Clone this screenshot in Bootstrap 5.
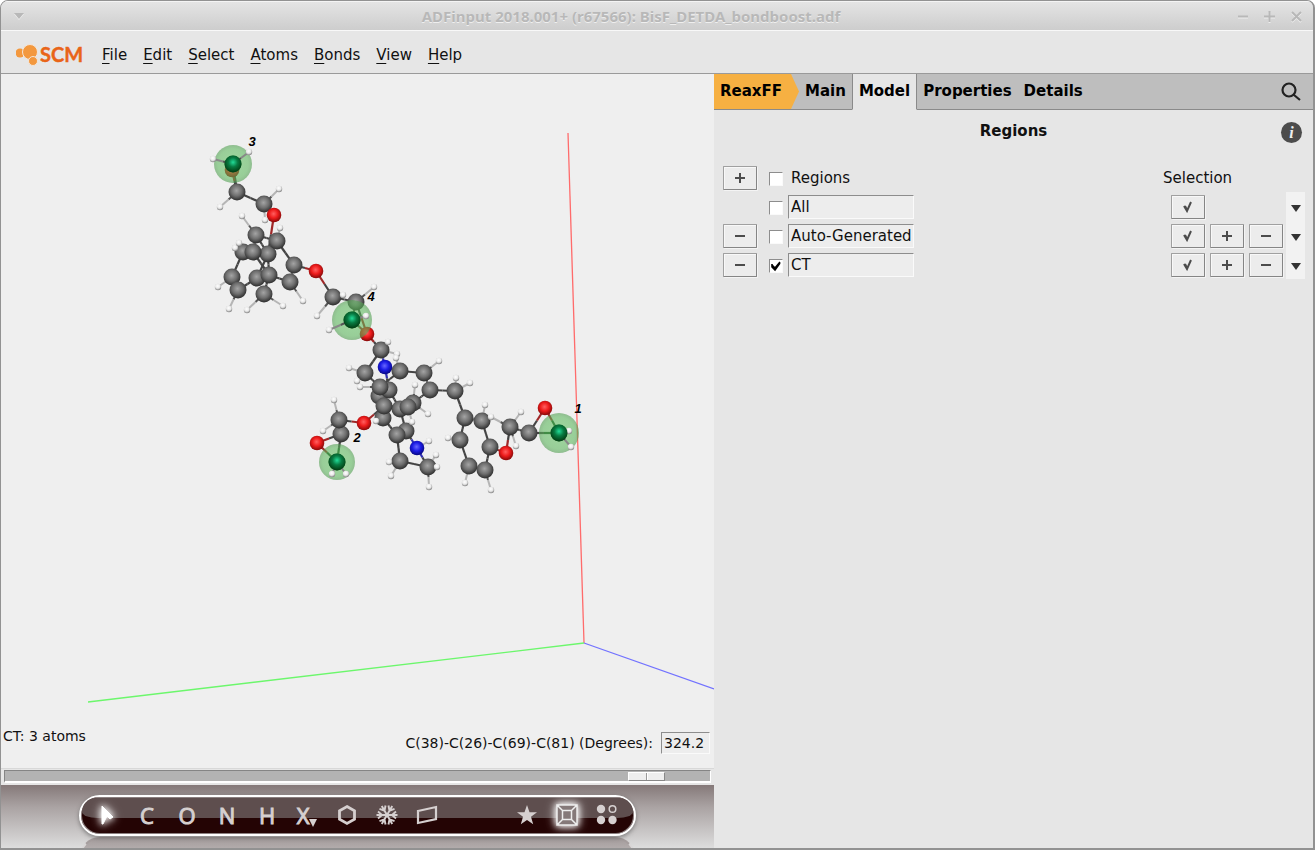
<!DOCTYPE html>
<html lang="en">
<head>
<meta charset="utf-8">
<meta name="viewport" content="width=device-width, initial-scale=1">
<title>ADFinput</title>
<link href="https://cdn.jsdelivr.net/npm/bootstrap@5.3.0/dist/css/bootstrap.min.css" rel="stylesheet">
<style>
body{font-family:"DejaVu Sans",sans-serif;font-size:15px;line-height:20px;color:#111;background:#fff}
.app-window{min-height:100vh;background:#e6e6e6;border:1px solid #929292;border-right-width:2px;border-bottom-width:2px;border-radius:8px 8px 0 0;overflow:hidden}
.title-bar{height:30px;padding:0 11px 0 12px;background:linear-gradient(#e4e4e4,#cdcdcd);border-top:1px solid #f4f4f4;border-bottom:1px solid #f8f8f8;font:bold 15px/28px "Noto Sans",sans-serif;color:#b8b8b8;text-shadow:0 1px 0 #efefef}
.title-bar svg{stroke:#b8b8b8;stroke-width:2;fill:none;filter:drop-shadow(0 1px 0 #eee)}
.title-bar .drop{fill:#b8b8b8;stroke:none}
.title-bar button,.tool,.plain{border:0;background:none;padding:0;line-height:1}
.menu-bar{height:43px;padding:6px 0 0 15px;border-bottom:1px solid #9a9a9a}
.menu-bar a{color:#111;text-decoration:none}
.menu-bar u{text-underline-offset:3px}
.brand{margin-right:2px}
.view-pane{flex:713 1 0;min-width:0;background:#efefef}
.side-pane{flex:599 1 0;min-width:0}
.scene{flex:1 1 0;min-height:0;width:100%;display:block}
.status{height:42px;font-size:14px;line-height:20px;padding-left:2px}
.sunken{border:1px solid;border-color:#8d8d8d #fafafa #fafafa #8d8d8d;background:#ededed;color:#111;border-radius:0;padding:0 2px;font:inherit;outline:0}
.angle{width:49px;height:22px}
.slide-row{height:17px;border-top:1px solid #d8d8d8;background:#e6e6e6;padding:1px 3px 0}
.slide-row input{appearance:none;-webkit-appearance:none;display:block;width:100%;height:13px;margin:0;background:#b3b3b3;border:1px solid;border-color:#858585 #fff #fff #858585;border-bottom-width:2px}
.slide-row input::-webkit-slider-thumb{-webkit-appearance:none;width:37px;height:9px;background:linear-gradient(90deg,transparent 17px,#999 17px,#999 18px,#fff 18px,#fff 19px,transparent 19px),#eee;border:1px solid;border-color:#fff #888 #888 #fff;border-radius:0}
.tool-area{height:63px;padding:10px 78px 0;background:linear-gradient(#857979,#aaa3a3 35%,#ddd);overflow:hidden}
.pill{height:41px;border:2px solid #fff;border-radius:21px;padding:0 7px 0 6px;background:#240404;position:relative;box-shadow:0 2px 4px #4448,inset 0 0 0 1px #8b8080;flex:none}
.pill::before{content:"";position:absolute;inset:1px 1px 16px 1px;background:#5e4e4e;border-radius:18px 18px 20px 20px/18px 18px 8px 8px}
.tool{position:relative;width:40px;height:36px;color:#d6d0d0;font:22px/36px "Open Sans",sans-serif;-webkit-text-stroke:1px #d6d0d0;display:flex;align-items:center;justify-content:center}
.tool svg{overflow:visible}
.glow{filter:drop-shadow(0 0 3px #fff) drop-shadow(0 0 5px #fffc)}
.echo{height:30px;margin-top:1px;border:2px solid #d9d6d6;border-top-color:#a59d9d;border-radius:21px 21px 0 0;background:linear-gradient(#a59d9d,#b6b0b0 12px)}
.tab-row{height:36px;background:linear-gradient(#8a8a8a,#8a8a8a) bottom/100% 1px no-repeat #bebebe;font-weight:bold}
.tab-row a{color:#000;text-decoration:none;height:36px;line-height:34px;padding:0 6px;border-bottom:1px solid #8a8a8a}
.tab-row .method{background:#f6b042;padding-right:9px;position:relative;margin-right:8px}
.tab-row .method::after{content:"";position:absolute;left:100%;top:0;width:8px;height:35px;background:#f6b042;clip-path:polygon(0 0,100% 50%,0 100%)}
.tab-row .current{background:#e6e6e6;border-left:1px solid #8a8a8a;border-right:1px solid #8a8a8a;border-bottom-color:#e6e6e6}
.heading{grid-template-columns:1fr auto 1fr;padding:0 11px}
.info{background:#4c4c4c;color:#eee;border-radius:50%;width:21px;height:21px;font:italic bold 16px/20px "Liberation Serif",serif;padding:0}
.regions{padding:0 8px 0 9px}
.region-row{height:29px}
.key,.no-key{width:34px;height:24px;flex:none}
.key{border:1px solid #a0a0a0;border-right-color:#858585;border-bottom-color:#858585;background:#ececec;box-shadow:inset 1px 1px 0 #f8f8f8,1px 1px 0 #f4f4f4;padding:0;display:flex;align-items:center;justify-content:center;border-radius:1px}
.key svg{fill:none;stroke:#4c4c4c;stroke-width:2}
.tick{appearance:none;-webkit-appearance:none;width:14px;height:14px;margin:2px 5px 0 12px;background:#fff;border:1px solid;border-color:#8d8d8d #fafafa #fafafa #8d8d8d;flex:none}
.tick:checked{background:#fff url("data:image/svg+xml,%3Csvg xmlns='http://www.w3.org/2000/svg' viewBox='0 0 12 12'%3E%3Cpath d='M2 4v3l3 3 5-7M2 5l3 3 5-6' fill='none' stroke='%23000' stroke-width='1.6'/%3E%3C/svg%3E") center/12px no-repeat}
.region-label{padding-left:3px}
.region-name{width:126px;height:24px}
.selection{width:142px}
.key-set{gap:5px}
.more{width:19px;height:29px;background:#f2f2f2}
</style>
</head>
<body>
<div class="app-window d-flex flex-column">
  <header class="title-bar d-flex align-items-center">
    <button aria-label="Window menu"><svg width="12" height="8" class="d-block" viewBox="0 0 12 8"><path class="drop" d="M1 1h10l-5 6z"/></svg></button>
    <div class="flex-fill text-center">ADFinput 2018.001+ (r67566): BisF_DETDA_bondboost.adf</div>
    <button aria-label="Minimize" class="me-3"><svg width="11" height="11" class="d-block"><path d="M1 5.500h10"/></svg></button>
    <button aria-label="Maximize" class="me-3"><svg width="11" height="11" class="d-block"><path d="M0 5.500h11M5.500 0v11"/></svg></button>
    <button aria-label="Close"><svg width="11" height="11" class="d-block"><path d="M1 1l9 9M10 1l-9 9"/></svg></button>
  </header>
  <nav class="menu-bar d-flex align-items-center gap-3">
    <a href="#" class="brand" aria-label="SCM"><svg class="d-block" width="68" height="24" viewBox="15 43 68 24"><g fill="#f3983e"><circle cx="19" cy="53" r="4.500"/><circle cx="29" cy="52" r="7.500" stroke="#f3e6da"/><circle cx="32" cy="61" r="4.500" stroke="#f3e6da"/></g><text x="39" y="62" font-family="Lato,sans-serif" font-weight="bold" font-size="20" fill="#e96418" stroke="#e96418" stroke-width=".4">SCM</text></svg></a>
    <a href="#"><u>F</u>ile</a><a href="#"><u>E</u>dit</a><a href="#"><u>S</u>elect</a><a href="#"><u>A</u>toms</a><a href="#"><u>B</u>onds</a><a href="#"><u>V</u>iew</a><a href="#"><u>H</u>elp</a>
  </nav>
  <main class="d-flex flex-fill">
    <section class="view-pane d-flex flex-column">
      <svg class="scene" viewBox="1 74 713 652" role="img" aria-label="Molecule">
        <defs>
          <radialGradient id="gC" cx=".47" cy=".42" r=".58"><stop offset="0" stop-color="#a4a4a4"/><stop offset=".55" stop-color="#6e6e6e"/><stop offset="1" stop-color="#2c2c2c"/></radialGradient>
          <radialGradient id="gH" cx=".45" cy=".35" r=".65"><stop offset="0" stop-color="#fff"/><stop offset=".55" stop-color="#e8e8e8"/><stop offset="1" stop-color="#808080"/></radialGradient>
          <radialGradient id="gO" cx=".47" cy=".42" r=".58"><stop offset="0" stop-color="#ff6060"/><stop offset=".5" stop-color="#ee1c1c"/><stop offset="1" stop-color="#850808"/></radialGradient>
          <radialGradient id="gN" cx=".47" cy=".42" r=".58"><stop offset="0" stop-color="#6868ff"/><stop offset=".5" stop-color="#1c1ce6"/><stop offset="1" stop-color="#080880"/></radialGradient>
          <radialGradient id="gG" cx=".5" cy=".4" r=".6"><stop offset="0" stop-color="#22dc98"/><stop offset=".45" stop-color="#087b42"/><stop offset="1" stop-color="#023a10"/></radialGradient>
          <radialGradient id="gS"><stop offset="0" stop-color="#5fc45f" stop-opacity=".55"/><stop offset=".8" stop-color="#59b659" stop-opacity=".58"/><stop offset="1" stop-color="#559e55" stop-opacity=".62"/></radialGradient>
        </defs>
        <g fill="none"><path d="M568 133L584 643" stroke="#ff6b6b" stroke-width="1.300"/><path d="M88 702L584 643" stroke="#6cf76c" stroke-width="1.300"/><path d="M584 643L714 689" stroke="#7272ff" stroke-width="1.300"/></g>
        <g id="molecule"></g>
        <g font-family="Liberation Sans,sans-serif" font-size="13" font-weight="bold" font-style="italic" text-anchor="middle"><text x="252" y="146">3</text><text x="371" y="301">4</text><text x="357" y="442">2</text><text x="578" y="413">1</text></g>
      </svg>
      <div class="status d-flex justify-content-between">
        <div>CT: 3 atoms</div>
        <div class="d-flex align-items-center pt-2 pe-1 mb-3"><label for="angle" class="me-2">C(38)-C(26)-C(69)-C(81) (Degrees):</label><input id="angle" class="sunken angle" value="324.2"></div>
      </div>
      <div class="slide-row"><input type="range" min="0" max="1000" value="933" aria-label="Torsion angle"></div>
      <div class="tool-area">
        <div class="pill d-flex">
          <button class="tool" aria-label="Select"><svg class="glow" width="14" height="20" viewBox="0 0 14 20"><path d="M2 1L13 12l-3 2-3-3-4 8H2z" fill="#fff" stroke="#fff"/></svg></button>
          <button class="tool">C</button><button class="tool">O</button><button class="tool">N</button><button class="tool">H</button>
          <button class="tool">X<svg width="8" height="8" class="mt-3" viewBox="0 0 8 8"><path d="M0 0h8l-4 8z" fill="currentColor"/></svg></button>
          <button class="tool" aria-label="Ring"><svg width="20" height="20" viewBox="0 0 20 20"><path d="M10 1.500l7.500 4.300v8.400L10 18.500l-7.500-4.300V5.800z" fill="none" stroke="currentColor" stroke-width="2.800"/></svg></button>
          <button class="tool" aria-label="Structures"><svg width="22" height="20" viewBox="-11 -10 22 20"><g fill="none" stroke="currentColor" stroke-width="1.900"><path id="arm" d="M-10.500 0h21M-9-3.500L-5 0l-4 3.500M9-3.500L5 0l4 3.500"/><use href="#arm" transform="rotate(60)"/><use href="#arm" transform="rotate(120)"/></g></svg></button>
          <button class="tool" aria-label="Plane"><svg width="20" height="18" viewBox="0 0 20 18"><path d="M1 5l18-4v12L1 17z" fill="none" stroke="currentColor" stroke-width="2.200"/></svg></button>
          <button class="tool ms-auto" aria-label="Favourites"><svg width="20" height="20" viewBox="0 0 20 20"><path d="M10 0l2.500 7.200H20l-6 4.600 2.200 7.500L10 15l-6.200 4.300L6 11.800 0 7.200h7.500z" fill="currentColor"/></svg></button>
          <button class="tool" aria-label="Periodic box"><svg class="glow" width="22" height="22" viewBox="0 0 22 22"><path fill="#857979" stroke="#eee" stroke-width="1.500" d="M1 1h20v20H1zM6.500 6.500h9v9h-9zM1 1l5.500 5.500M21 1l-5.500 5.500M1 21l5.500-5.500M21 21l-5.500-5.500"/></svg></button>
          <button class="tool" aria-label="Style"><svg width="22" height="22" viewBox="0 0 22 22"><g fill="currentColor"><circle cx="5" cy="5" r="4.200"/><circle cx="5" cy="16" r="4.200"/><circle cx="16.500" cy="16" r="4.200"/></g><circle cx="16.500" cy="5" r="3.300" fill="none" stroke="currentColor" stroke-width="1.500"/></svg></button>
        </div>
        <div class="echo"></div>
      </div>
    </section>
    <section class="side-pane">
      <nav class="tab-row d-flex">
        <a href="#" class="method">ReaxFF</a><a href="#">Main</a><a href="#" class="current">Model</a><a href="#">Properties</a><a href="#">Details</a>
        <button class="plain ms-auto me-2 pe-1" aria-label="Search"><svg width="20" height="20" viewBox="0 0 20 20"><path d="M8 1.500a6.500 6.500 0 1 1 0 13a6.500 6.500 0 1 1 0-13M13 13l6 5" fill="none" stroke="#222" stroke-width="2.200"/></svg></button>
      </nav>
      <div class="heading d-grid align-items-center mt-2 mb-3 pb-1">
        <span></span><strong>Regions</strong><button class="plain info ms-auto mt-1" aria-label="Information">i</button>
      </div>
      <form class="regions" id="regions">
        <div class="region-row d-flex align-items-center"><button type="button" class="key" aria-label="Add region"><svg width="12" height="12"><path d="M1 6h10M6 1v10"/></svg></button><input class="tick" type="checkbox" id="allRegions"><label for="allRegions" class="region-label">Regions</label><span class="ms-auto selection">Selection</span></div>
      </form>
    </section>
  </main>
</div>
<script src="https://cdn.jsdelivr.net/npm/bootstrap@5.3.0/dist/js/bootstrap.bundle.min.js"></script>
<script>
// Region rows: name, checked, and whether it can be edited
const glyph = {
  plus: '<svg width="12" height="12"><path d="M1 6h10M6 1v10"/></svg>',
  minus: '<svg width="12" height="12"><path d="M1 6h10"/></svg>',
  check: '<svg width="12" height="12"><path d="M2 5l3 5 4-9M3 5l2 4"/></svg>'
};
const key = (g, label) => `<button type="button" class="key" aria-label="${label}">${glyph[g]}</button>`;
const form = document.getElementById('regions');
[['All', false, false], ['Auto-Generated', false, true], ['CT', true, true]].forEach(([name, on, editable]) => {
  form.insertAdjacentHTML('beforeend', `<div class="region-row d-flex align-items-center">
    ${editable ? key('minus', 'Remove ' + name) : '<span class="no-key"></span>'}
    <input class="tick" type="checkbox" aria-label="Show ${name}" ${on ? 'checked' : ''}><input class="sunken region-name" aria-label="Region name" value="${name}">
    <div class="selection d-flex align-items-center ms-auto ps-2"><div class="key-set d-flex flex-fill">${key('check', 'Select ' + name)}${editable ? key('plus', 'Add selection') + key('minus', 'Remove selection') : ''}</div>
    <button type="button" class="plain more" aria-label="More"><svg width="10" height="7" class="mt-1" viewBox="0 0 10 7"><path d="M0 0h10L5 7z" fill="#333"/></svg></button></div></div>`);
});

// Heavy atoms: id -> [element, x, y]
const atoms = {
 red3:['O',232,170],c1:['C',237,192],c2:['C',264,204],o1:['O',274,215],
 c8:['C',243,252],c11:['C',257,278],c7:['C',268,254],c6:['C',253,252],c3:['C',256,235],c4:['C',277,241],c9:['C',232,277],c10:['C',238,290],
 c5:['C',294,265],o2:['O',316,271],c13:['C',290,282],c14:['C',264,294],c12:['C',269,275],
 c15:['C',333,297],c16:['C',356,302],o3:['O',367,334],c17:['C',381,350],c18:['C',365,373],n1:['N',385,367],
 c19:['C',400,371],c20:['C',424,373],c21:['C',430,390],c22:['C',455,391],c25:['C',379,396],c24:['C',389,390],c23:['C',380,387],
 c29:['C',383,418],c27:['C',400,409],b2:['C',413,403],c28:['C',408,407],c26:['C',384,406],c31:['C',406,431],c30:['C',397,435],
 n2:['N',417,448],c32:['C',400,461],c33:['C',428,467],o4:['O',364,423],c35:['C',341,434],c34:['C',339,420],o5:['O',317,443],
 c36:['C',465,418],c37:['C',482,421],c38:['C',460,440],c39:['C',469,466],c40:['C',485,470],c41:['C',490,447],
 o6:['O',506,453],c42:['C',510,427],c43:['C',529,433],o7:['O',545,408],
 g3:['G',233,164],g4:['G',352,320],g2:['G',337,462],g1:['G',559,433]
};
const bonds = 'g3-c1 red3-c1 c1-c2 c2-o1 o1-c7 c3-c4 c3-c6 c3-c7 c4-c5 c4-c7 c6-c8 c8-c9 c9-c10 c10-c11 c11-c12 c7-c12 c6-c12 c7-c11 c12-c14 c12-c13 c13-c5 c5-o2 o2-c15 c15-c16 c16-g4 g4-o3 c16-o3 o3-c17 c17-c18 c17-n1 c18-c23 n1-c24 n1-c19 c19-c20 c20-c21 c21-c22 c21-b2 c19-c23 c23-c26 c26-c28 c24-c27 c25-c29 c26-o4 o4-c34 c34-c35 c35-o5 o5-g2 c35-g2 c29-c30 c27-c31 c30-c32 c31-n2 n2-c33 c32-c33 c22-c36 c36-c37 c36-c38 c38-c39 c39-c40 c40-c41 c41-c37 c41-o6 o6-c42 c42-c43 c43-o7 o7-g1 c43-g1'.split(' ');
// Hydrogens: parent atom, x, y
const hydrogens = 'g3,213,159 g3,249,152 c1,220,207 c2,279,189 c2,265,220 c3,242,216 c4,280,228 c8,235,248 c8,239,243 c9,218,287 c10,229,309 c13,303,301 c14,247,310 c14,283,306 c15,317,316 c15,343,295 c16,374,287 g4,366,316 g4,329,330 c17,388,342 c17,397,354 c18,349,368 c18,357,381 c19,396,358 c20,439,361 c22,456,378 c22,470,383 c23,360,387 b2,415,385 b2,428,414 c28,412,422 c29,376,421 n2,429,441 c32,389,462 c32,391,476 c33,436,455 c33,437,467 c33,429,487 c34,334,400 c34,323,431 g2,332,474 g2,346,474 c37,485,405 c42,491,417 c38,448,438 c39,465,483 c40,491,490 c42,521,412 c42,516,446 g1,569,431 g1,571,447'.split(' ');
const tint = {C:'#444', O:'#a02828', N:'#3030b0', G:'#20502a'};
const radius = {C:8.5, O:7.3, N:7.3, G:8.5};
const line = (x1,y1,x2,y2,c,w) => `<path d="M${x1} ${y1}L${x2} ${y2}" stroke="${c}" stroke-width="${w}"/>`;
let out = '', tips = '', front = '';
bonds.forEach(b => {
  const [p, q] = b.split('-').map(k => atoms[k]);
  const mx = (p[1]+q[1])/2, my = (p[2]+q[2])/2;
  out += line(p[1],p[2],mx,my,tint[p[0]],2.2) + line(mx,my,q[1],q[2],tint[q[0]],2.2);
});
hydrogens.forEach(h => {
  const [k, x, y] = h.split(','), p = atoms[k];
  const mx = (p[1]+ +x)/2, my = (p[2]+ +y)/2;
  const stick = line(p[1],p[2],mx,my,'#555',2) + line(mx,my,x,y,k[0] === 'g' ? '#888' : '#b5b5b5',2);
  const ball = `<circle cx="${x}" cy="${y}" r="3.200" fill="url(#gH)"/>`;
  if (k[0] === 'g') front += stick + ball; else { out += stick; tips += ball; }
});
for (const [e, x, y] of Object.values(atoms)) out += `<circle cx="${x}" cy="${y}" r="${radius[e]}" fill="url(#g${e})"/>`;
out += tips;
// Translucent spheres over the atoms of the selected region
const marked = [['g3',19],['g4',20],['g2',18],['g1',20]];
marked.forEach(([k, r]) => { out += `<circle cx="${atoms[k][1]}" cy="${atoms[k][2]}" r="${r}" fill="url(#gS)"/>`; });
out += front;
marked.forEach(([k]) => { out += `<circle cx="${atoms[k][1]}" cy="${atoms[k][2]}" r="8.500" fill="url(#gG)"/>`; });
document.getElementById('molecule').innerHTML = out;
</script>
</body>
</html>
